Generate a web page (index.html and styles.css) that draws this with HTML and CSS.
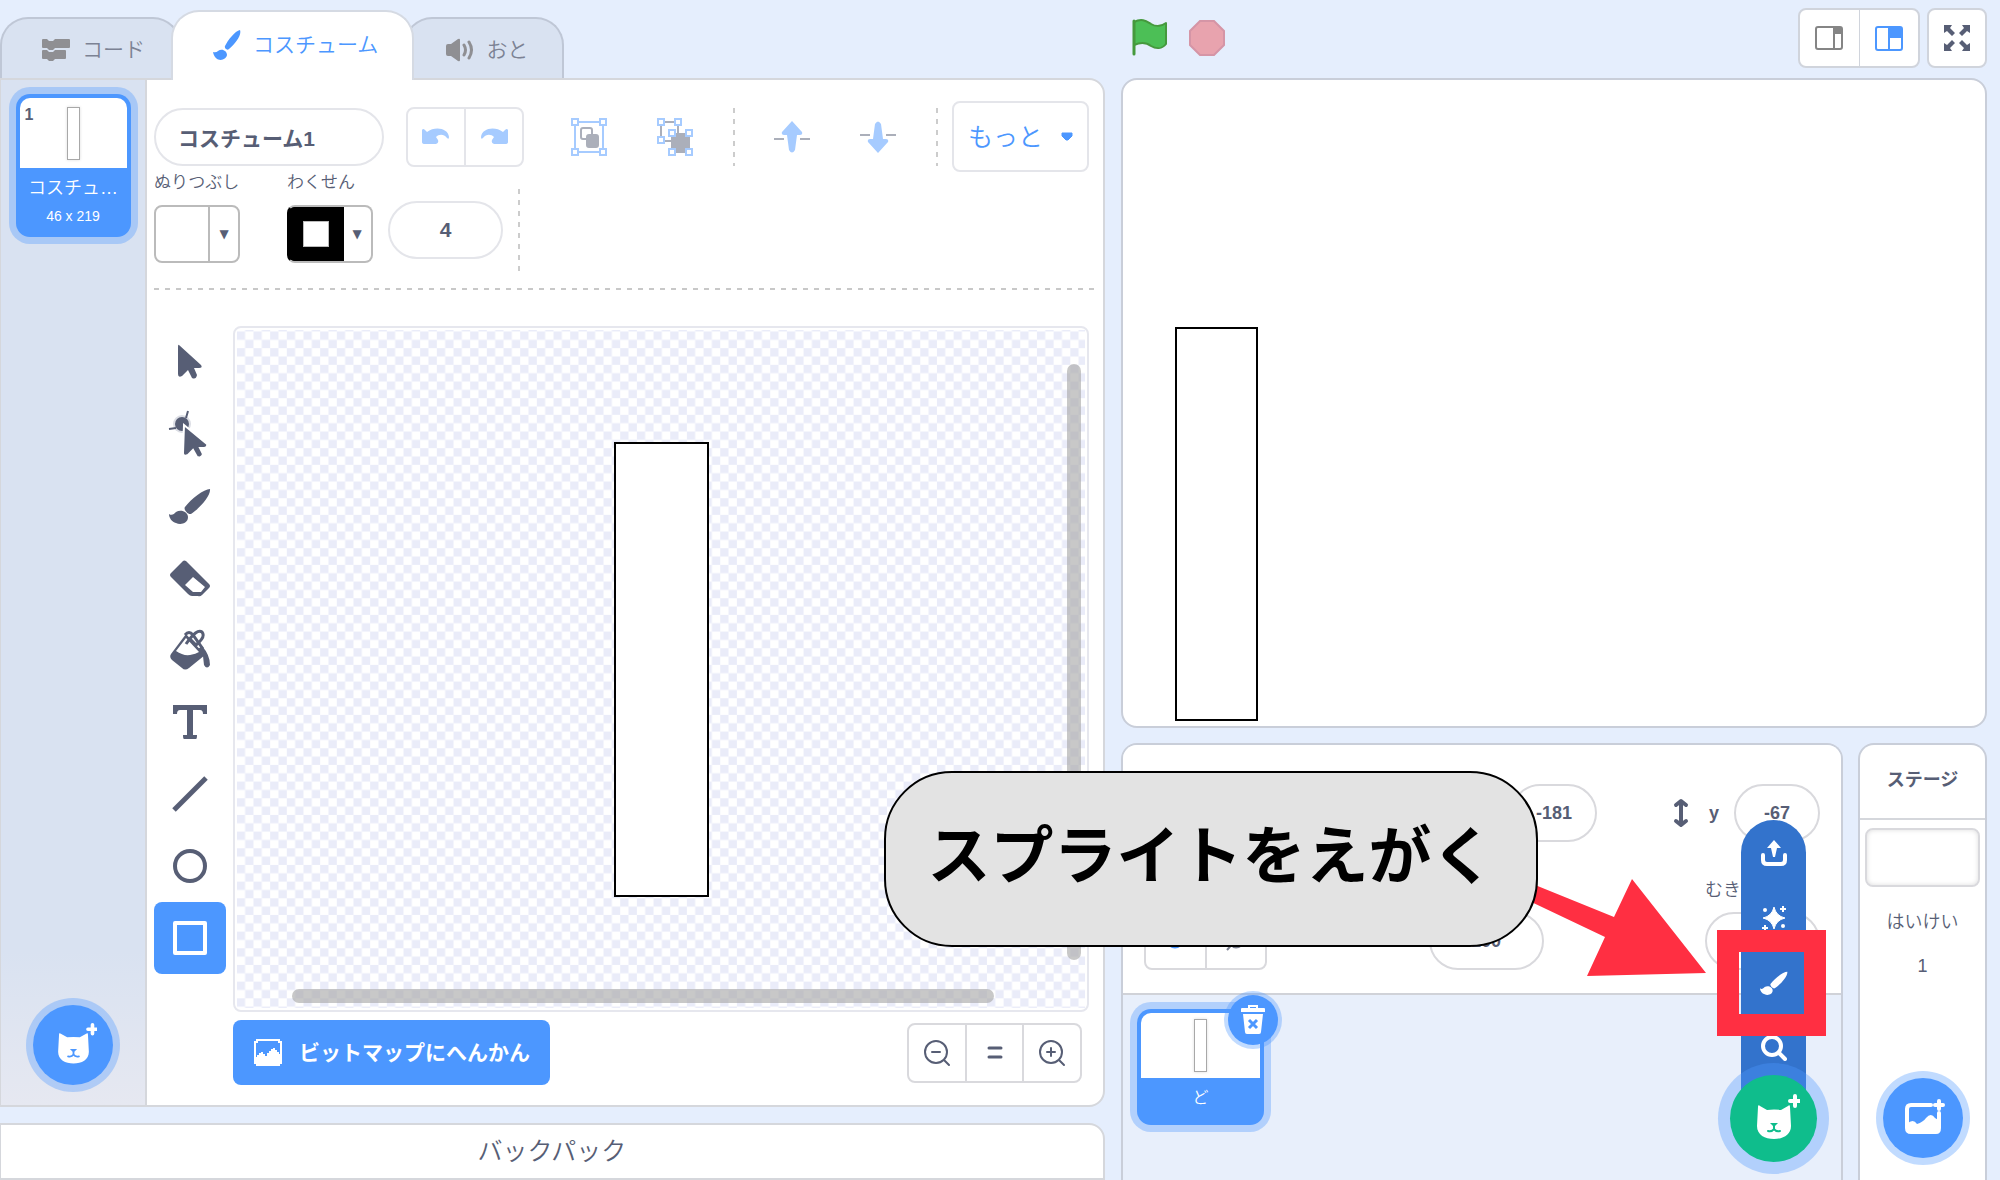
FILE: index.html
```html
<!DOCTYPE html>
<html lang="ja">
<head>
<meta charset="utf-8">
<title>コスチューム</title>
<link rel="stylesheet" href="styles.css">
</head>
<body>
<svg class="defs" aria-hidden="true">
  <symbol id="brush" viewBox="0 0 42 36">
    <path d="M41 1C35 1 22 11 16 19C14 21 19 27 22 26C30 21 42 8 41 1Z"/>
    <path d="M0 26C3 28 5 26 7 24C12 21 19 24 19 29C19 36 11 37 7 35C3 34 0 30 0 26Z"/>
  </symbol>
  <symbol id="cat" viewBox="-26 -26 52 52">
    <path d="M-16-12C-16-14-15-14-14-13L-7-9Q0-10 7-9L14-13C15-14 16-14 16-12L17 7C17 16 9 20 0 20S-17 16-17 7Z" fill="#fff"/>
    <path d="M-4 4H4L1 7H-1Z" class="cat-nose"/>
    <path d="M0 7V10Q-2 13-6 12M0 10Q2 13 6 12" class="cat-mouth"/>
    <path d="M21-23V-13M16-18H26" stroke="#fff" stroke-width="4" stroke-linecap="round"/>
  </symbol>
</svg>
<main class="app">
  <section class="left">
    <nav class="tabs">
      <button class="tab"><svg width="28" height="24" viewBox="0 0 28 24" fill="#8f8f93"><path d="M0 2Q0 1 1 1H5L7 3H11L13 1H27Q28 1 28 2V9Q28 10 27 10H13L11 12H7L5 10H1Q0 10 0 9Z"/><path d="M0 13Q0 12 1 12H5L7 14H11L13 12H23Q24 12 24 13V20Q24 21 23 21H13L11 23H7L5 21H1Q0 21 0 20Z"/></svg>コード</button>
      <button class="tab active"><svg width="28" height="31" viewBox="0 0 28 31"><path d="M27 0C22 1 15 10 12 16C11 18 14 21 16 19C22 14 29 5 27 0ZM0 22Q3 23 5 21C9 18 14 21 14 25C13 31 2 33 0 22Z" fill="#4c97ff"/></svg>コスチューム</button>
      <button class="tab"><svg width="28" height="24" viewBox="0 0 28 24"><path d="M0 8Q0 6 2 6H5L12 1Q14 0 14 2V22Q14 24 12 23L5 18H2Q0 18 0 16Z" fill="#8f8f93"/><path d="M18 7Q21 12 18 17M23 4Q28 12 23 20" fill="none" stroke="#8f8f93" stroke-width="3" stroke-linecap="round"/></svg>おと</button>
    </nav>
    <div class="panel editor">
      <aside class="costumes">
        <div class="card">
          <div class="card-pic"><b class="card-num">1</b><span class="thumb"></span></div>
          <span class="card-name">コスチュ…</span>
          <span class="card-size">46 x 219</span>
        </div>
        <button class="add" aria-label="add costume"><svg width="47" height="47" class="on-blue"><use href="#cat"/></svg></button>
      </aside>
      <div class="paint">
        <div class="row1">
          <input class="pill name" type="text" value="コスチューム1" aria-label="costume">
          <div class="group undo">
            <button aria-label="undo"><svg width="28" height="18" viewBox="0 0 28 18" fill="#a6cbff"><path d="M0 2Q1 0 3 2L5 4C13-2 26 0 27 9Q27 12 25 10C22 6 17 6 14 9L16 12Q17 15 14 16H3Q0 16 0 14Z"/></svg></button>
            <button aria-label="redo"><svg width="28" height="18" viewBox="0 0 28 18" fill="#a6cbff"><path d="M28 2Q27 0 25 2L23 4C15-2 2 0 1 9Q1 12 3 10C6 6 11 6 14 9L12 12Q11 15 14 16H25Q28 16 28 14Z"/></svg></button>
          </div>
          <div class="pair">
            <button aria-label="group"><svg width="36" height="38" viewBox="0 0 36 38" fill="none" stroke-width="2"><path d="M4 4H32V34H4Z" stroke="#a6cbff"/><rect x="10" y="10" width="11" height="11" rx="2" stroke="#abafba"/><rect x="16" y="17" width="11" height="12" rx="2" fill="#abafba" stroke="#abafba"/><g fill="#fff" stroke="#a6cbff"><path d="M1 1H7V7H1ZM29 1H35V7H29ZM1 31H7V37H1ZM29 31H35V37H29Z"/></g></svg></button>
            <button aria-label="ungroup"><svg width="36" height="38" viewBox="0 0 36 38" fill="none" stroke-width="2"><path d="M4 4H21V23H4Z" stroke="#abafba"/><path d="M15 16H32V34H15Z" fill="#abafba" stroke="#abafba"/><g fill="#fff" stroke="#a6cbff"><path d="M1 1H7V7H1ZM18 1H24V7H18ZM1 19H7V25H1ZM12 12H18V18H12ZM29 12H35V18H29ZM12 31H18V37H12ZM29 31H35V37H29Z"/></g></svg></button>
          </div>
          <i class="vdash"></i>
          <div class="pair">
            <button aria-label="forward"><svg width="38" height="32" viewBox="0 0 38 32"><path d="M1 18H11M27 18H37" stroke="#abafba" stroke-width="2"/><path d="M19 0L29 11Q30 14 27 14H24L22 29Q19 34 16 29L14 14H11Q8 14 9 11Z" fill="#a6cbff"/></svg></button>
            <button aria-label="backward"><svg width="38" height="32" viewBox="0 0 38 32"><path d="M1 14H11M27 14H37" stroke="#abafba" stroke-width="2"/><path d="M19 32L29 21Q30 18 27 18H24L22 3Q19-2 16 3L14 18H11Q8 18 9 21Z" fill="#a6cbff"/></svg></button>
          </div>
          <i class="vdash"></i>
          <button class="more">もっと<svg width="12" height="9" viewBox="0 0 12 9"><path d="M1 1H11V4L7 8H5L1 4Z" fill="#4c97ff" stroke="#4c97ff" stroke-linejoin="round"/></svg></button>
        </div>
        <div class="row2">
          <div class="swatch">
            <label for="fill">ぬりつぶし</label>
            <button id="fill" class="picker"><span class="chip"></span><span class="drop">▼</span></button>
          </div>
          <div class="swatch">
            <label for="stroke">わくせん</label>
            <button id="stroke" class="picker"><span class="chip black"><span class="hole"></span></span><span class="drop">▼</span></button>
          </div>
          <input class="pill width" type="text" value="4" aria-label="わくせん">
          <i class="vdash tall"></i>
        </div>
        <div class="work">
          <div class="tools">
            <button aria-label="select"><svg width="44" height="44" viewBox="0 0 44 44"><path d="M11 5L33 25Q35 28 31 28H26L29 35Q28 40 24 38L20 30L14 36Q10 38 10 34V7Q10 4 11 5Z"/></svg></button>
            <button aria-label="reshape"><svg width="44" height="48" viewBox="0 0 44 48"><circle cx="14" cy="14" r="9" fill="#dcdee5"/><circle cx="14" cy="14" r="7"/><path d="M1 19L8 18M18 8L20 1" stroke="#575e75" stroke-width="2"/><path d="M16 15L39 34Q40 37 36 38H32L35 44Q33 49 29 47L25 40L20 45Q15 47 15 43Z" stroke="#fff" stroke-width="2"/></svg></button>
            <button aria-label="brush"><svg width="42" height="36"><use href="#brush"/></svg></button>
            <button aria-label="eraser"><svg width="40" height="37" viewBox="0 0 40 37"><path d="M13 1Q14 0 16 1L39 24Q41 26 39 28L32 35Q30 37 28 36H22Q20 36 18 34L1 17Q-1 15 1 13ZM23 17L15 25L23 32H31L35 27Z" fill-rule="evenodd"/></svg></button>
            <button aria-label="fill tool"><svg width="42" height="42" viewBox="0 0 42 42"><path d="M2 25L17 5L36 26L20 39Q16 42 13 39L3 31Q0 28 2 25ZM17 9L7 22Q14 27 21 26Q27 25 30 23Z" fill-rule="evenodd"/><path d="M16 6Q20 1 24 6L34 20M17 15Q28-1 33 3Q37 8 27 16L20 9" fill="none" stroke="#575e75" stroke-width="3"/><path d="M33 17Q41 26 41 36Q38 41 35 36L34 27L29 20Z"/></svg></button>
            <button aria-label="text"><svg width="36" height="36" viewBox="0 0 36 36"><path d="M1 1H35V10H31Q31 6 28 6H21V31H25Q25 35 24 35H12Q11 35 11 31H15V6H8Q5 6 5 10H1Z"/></svg></button>
            <button aria-label="line"><svg width="38" height="38" viewBox="0 0 38 38"><path d="M3 35L35 3" stroke="#575e75" stroke-width="5"/></svg></button>
            <button aria-label="circle"><svg width="34" height="34" viewBox="0 0 34 34"><circle cx="17" cy="17" r="15" fill="none" stroke="#575e75" stroke-width="4"/></svg></button>
            <button class="on" aria-label="rectangle"><svg width="34" height="34" viewBox="0 0 34 34"><rect x="2" y="2" width="30" height="30" fill="none" stroke="#fff" stroke-width="4" stroke-linejoin="round"/></svg></button>
          </div>
          <div class="board">
            <div class="canvas">
              <svg class="checks"><defs><pattern id="ck" x="-0.200" y="1.500" width="16.670" height="16.670" patternUnits="userSpaceOnUse"><path d="M0 0H8.330V8.330H0ZM8.330 8.330H16.670V16.670H8.330Z" fill="#eaecf9"/></pattern></defs><rect width="100%" height="100%" fill="url(#ck)"/></svg>
              <span class="drawn"></span>
              <span class="bar-v"></span>
              <span class="bar-h"></span>
            </div>
            <div class="foot">
              <button class="convert"><svg width="30" height="28" viewBox="0 0 30 28"><path d="M4 1H26V3H28V24H26V26H4V24H2V3H4Z" fill="none" stroke="#fff" stroke-width="2"/><path d="M2 18H4V16H6V14H8V13H10V15H12V17H14V14H16V12H18V10H20V9H22V11H24V13H26V15H28V24H26V26H4V24H2Z" fill="#fff"/></svg>ビットマップにへんかん</button>
              <div class="group zoom">
                <button aria-label="zoom out"><svg width="28" height="28" viewBox="0 0 28 28" class="line"><circle cx="13" cy="13" r="11"/><path d="M9 13H17M21 21L26 26"/></svg></button>
                <button aria-label="reset zoom"><svg width="28" height="28" viewBox="0 0 28 28" class="line bold"><path d="M8 9H20M8 18H20"/></svg></button>
                <button aria-label="zoom in"><svg width="28" height="28" viewBox="0 0 28 28" class="line"><circle cx="13" cy="13" r="11"/><path d="M9 13H17M13 9V17M21 21L26 26"/></svg></button>
              </div>
            </div>
          </div>
        </div>
      </div>
    </div>
    <button class="backpack">バックパック</button>
  </section>

  <section class="right">
    <header class="controls">
      <button aria-label="go"><svg width="36" height="38" viewBox="0 0 36 38"><path d="M2 3C10-1 14 2 19 5C24 8 30 7 34 4V25C30 30 24 30 19 27C14 23 9 23 2 26" fill="#4cbf56" stroke="#45993d" stroke-width="2" stroke-linejoin="round"/><path d="M2 2V35" stroke="#45993d" stroke-width="3" stroke-linecap="round"/></svg></button>
      <button aria-label="stop"><svg width="36" height="36" viewBox="0 0 36 36"><path d="M11 1H25L35 11V25L25 35H11L1 25V11Z" fill="#e8a3ae" stroke="#d595a6" stroke-width="2"/></svg></button>
      <span class="grow"></span>
      <div class="group size">
        <button aria-label="small stage"><svg width="28" height="26" viewBox="0 0 28 26" fill="none" stroke="#858585" stroke-width="2"><rect x="1" y="2" width="26" height="22" rx="2"/><path d="M19 2V24"/><path d="M20 3H26V8H20Z" fill="#858585"/></svg></button>
        <button aria-label="large stage"><svg width="28" height="26" viewBox="0 0 28 26" fill="none" stroke="#4c97ff" stroke-width="2"><rect x="1" y="2" width="26" height="23" rx="2"/><path d="M14 2V25"/><path d="M15 3H26V12H15Z" fill="#4c97ff"/></svg></button>
      </div>
      <div class="group full">
        <button aria-label="full screen"><svg width="26" height="26" viewBox="0 0 26 26" fill="#575e75"><path d="M0 0H8L6 3L11 8L8 11L3 6L0 8Z"/><path d="M26 0H18L20 3L15 8L18 11L23 6L26 8ZM0 26H8L6 23L11 18L8 15L3 20L0 18ZM26 26H18L20 23L15 18L18 15L23 20L26 18Z"/></svg></button>
      </div>
    </header>
    <div class="panel stage"><span class="sprite"></span></div>
    <div class="lower">
      <div class="panel sprites">
        <div class="info">
          <div class="line1">
            <input class="pill small" type="text" value="-181" aria-label="x">
            <label class="ylab" for="ypos"><svg width="16" height="30" viewBox="0 0 16 30"><path d="M8 4V26M3 7L8 3L13 7M3 23L8 27L13 23" fill="none" stroke="#575e75" stroke-width="4" stroke-linecap="round" stroke-linejoin="round"/></svg>y</label>
            <input class="pill small" type="text" value="-67" id="ypos">
          </div>
          <div class="line2">
            <div class="group show">
              <button aria-label="show"><svg width="28" height="22" viewBox="0 0 28 22"><path d="M2 11Q14-6 26 11Q14 28 2 11Z" fill="#4c97ff"/><circle cx="14" cy="11" r="5" fill="#fff"/></svg></button>
              <button aria-label="hide"><svg width="28" height="22" viewBox="0 0 28 22"><path d="M2 11Q14-6 26 11Q14 28 2 11Z" fill="#7c8090"/><circle cx="14" cy="11" r="5" fill="#fff"/><path d="M4 22L23 1" stroke="#fff" stroke-width="5"/><path d="M5 21L23 1" stroke="#7c8090" stroke-width="2"/></svg></button>
            </div>
            <input class="pill width" type="text" value="100" aria-label="size">
            <div class="dir"><label for="dir">むき</label><input class="pill width" type="text" id="dir"></div>
          </div>
        </div>
        <div class="list">
          <div class="card wide">
            <div class="card-pic"><span class="thumb"></span></div>
            <span class="card-name">ど</span>
            <button class="trash" aria-label="delete"><svg width="26" height="30" viewBox="0 0 26 30"><path d="M9 3V1H17V3" fill="none" stroke="#fff" stroke-width="2"/><path d="M1 4Q1 3 2 3H24Q25 3 25 4V7H1ZM3 9H23L21 27Q21 29 19 29H7Q5 29 5 27Z" fill="#fff"/><path d="M9 15L17 23M17 15L9 23" stroke="#4c97ff" stroke-width="3"/></svg></button>
          </div>
        </div>
        <div class="menu">
          <button aria-label="upload"><svg width="26" height="26" viewBox="0 0 26 26"><path d="M13 0L20 8H16L14 17H12L10 8H6Z" fill="#fff"/><path d="M2 15V20Q2 24 6 24H20Q24 24 24 20V15" fill="none" stroke="#fff" stroke-width="4" stroke-linecap="round"/></svg></button>
          <button aria-label="surprise"><svg width="26" height="26" viewBox="0 0 26 26" fill="#fff"><path d="M13 2Q15 11 24 13Q15 15 13 24Q11 15 2 13Q11 11 13 2Z" stroke="#fff" stroke-linejoin="round"/><path d="M22 1V7M19 4H25M4 20V26M1 23H7" stroke="#fff" stroke-width="2"/><circle cx="4" cy="5" r="2"/><circle cx="22" cy="21" r="2"/></svg></button>
          <button aria-label="paint"><svg width="28" height="26" viewBox="0 0 42 36" fill="#fff"><use href="#brush"/></svg></button>
          <button aria-label="search"><svg width="26" height="26" viewBox="0 0 26 26" fill="none" stroke="#fff" stroke-width="4" stroke-linecap="round"><circle cx="11" cy="11" r="9"/><path d="M18 18L24 24"/></svg></button>
        </div>
        <button class="add green" aria-label="add sprite"><svg width="52" height="52" class="on-green"><use href="#cat"/></svg></button>
      </div>
      <div class="panel backdrops">
        <h2>ステージ</h2>
        <div class="backdrop"></div>
        <p>はいけい</p>
        <p>1</p>
        <button class="add" aria-label="add backdrop"><svg width="52" height="52" viewBox="-26 -26 52 52" fill="none"><path d="M8-13H-12Q-16-13-16-9V10Q-16 14-12 14H13Q16 14 16 10V-5" stroke="#fff" stroke-width="4" stroke-linecap="round"/><path d="M-16 6Q-10 0-6 6Q0 4 3 0Q8-6 12 0L17 3V13H-16Z" fill="#fff"/><path d="M16-18V-8M11-13H21" stroke="#4c97ff" stroke-width="8"/><path d="M16-17V-9M12-13H20" stroke="#fff" stroke-width="4" stroke-linecap="round"/></svg></button>
      </div>
    </div>
    <svg class="arrow" width="200" height="110" viewBox="0 0 200 110"><path d="M12 6L108 45L126 7L200 101L81 104L99 65L2 19Z" fill="#ff2f42"/></svg>
    <div class="frame"></div>
    <div class="callout">スプライトをえがく</div>
  </section>
</main>
</body>
</html>
```
FILE: styles.css
```css
* { box-sizing: border-box; }
body {
  margin: 0;
  background: #e5eefd;
  color: #575e75;
  font-family: "Liberation Sans", "Noto Sans CJK JP", sans-serif;
  font-size: 18px;
  font-weight: 350;
  line-height: 22px;
}
button {
  margin: 0;
  padding: 0;
  border: 0;
  background: none;
  color: inherit;
  font: inherit;
  display: flex;
  align-items: center;
  justify-content: center;
}
svg { display: block; flex: none; }
.defs { position: absolute; width: 0; height: 0; }
.app { display: flex; gap: 16px; min-height: 100vh; padding-right: 13px; }
.left { flex: 1; min-width: 0; display: flex; flex-direction: column; }
.right { width: 866px; display: flex; flex-direction: column; position: relative; }
.panel { background: #fff; border: 2px solid #c9ced9; border-radius: 16px; }

/* Tabs */
.tabs { display: flex; align-items: flex-end; height: 78px; }
.tab {
  height: 61px;
  padding: 2px 34px 0 40px;
  gap: 12px;
  background: #d9e2f1;
  border: 2px solid #bfc7d6;
  border-bottom: 0;
  border-radius: 28px 28px 0 0;
  font-size: 21px;
  color: #7c8294;
}
.tab.active {
  height: 70px;
  margin: 0 -10px -2px;
  padding-top: 0;
  padding-bottom: 2px;
  background: #fff;
  border-color: #d5dae3;
  color: #4c97ff;
  z-index: 1;
}

/* Costume editor */
.editor { flex: 1; display: flex; border-left-width: 1px; border-radius: 0 16px 16px 0; border-color: #d5d7dc; }
.costumes {
  width: 146px;
  padding: 14px;
  display: flex;
  flex-direction: column;
  justify-content: space-between;
  align-items: center;
  background: linear-gradient(#d9e2f1 85%, #e6e8f1);
  border-right: 2px solid #d5d7dc;
}
.card {
  position: relative;
  width: 115px;
  height: 143px;
  padding: 4px;
  display: flex;
  flex-direction: column;
  align-items: center;
  background: #4c97ff;
  border-radius: 14px;
  box-shadow: 0 0 0 7px rgba(76, 151, 255, .35);
  color: #fff;
}
.card-pic {
  width: 100%;
  height: 70px;
  display: flex;
  align-items: center;
  justify-content: center;
  position: relative;
  background: #fff;
  border-radius: 10px 10px 0 0;
}
.card-num { position: absolute; left: 5px; top: 6px; color: #575e75; font-size: 16px; font-weight: bold; }
.thumb { width: 13px; height: 53px; border: 1px solid #a8a8a8; box-shadow: 0 0 3px #ddd; }
.card-name { margin-top: 9px; }
.card-size { margin-top: 6px; font-size: 14px; }
.add {
  width: 80px;
  height: 80px;
  margin-bottom: 6px;
  border-radius: 50%;
  background: #4c97ff;
  box-shadow: 0 0 0 7px rgba(76, 151, 255, .35);
}
.cat-nose { fill: currentColor; }
.cat-mouth { fill: none; stroke: currentColor; stroke-width: 2; stroke-linecap: round; }
.on-blue { color: #4c97ff; }
.on-green { color: #0fbd8c; }

.paint { flex: 1; min-width: 0; padding: 21px 14px 20px 7px; display: flex; flex-direction: column; }
.row1 { display: flex; align-items: center; gap: 15px; height: 71px; }
.pill {
  height: 58px;
  border: 2px solid #e4e5ea;
  border-radius: 29px;
  background: #fff;
  color: #575e75;
  font: bold 21px/24px "Liberation Sans", "Noto Sans CJK JP", sans-serif;
  text-align: center;
}
.name { width: 230px; padding: 0 22px; text-align: left; }
.width { width: 115px; }
.small { width: 86px; padding: 0; }
.group { display: flex; height: 60px; background: #fff; border: 2px solid #e4e5ea; border-radius: 8px; }
.group button { flex: 1; }
.group button + button { border-left: 2px solid #e4e5ea; }
.undo { width: 118px; margin: 0 7px; }
.pair { display: flex; }
.pair button { width: 86px; height: 60px; }
.vdash { width: 2px; height: 58px; margin-right: -1px; background: repeating-linear-gradient(#ccc 0 5px, transparent 5px 11px); }
.more {
  width: 137px;
  height: 71px;
  margin-left: auto;
  gap: 18px;
  border: 2px solid #e4e5ea;
  border-radius: 8px;
  color: #4c97ff;
  font-size: 25px;
}
.row2 {
  display: flex;
  align-items: flex-start;
  height: 118px;
  margin-right: -8px;
  background: repeating-linear-gradient(90deg, #c8c8c8 0 5px, transparent 5px 11px) 0 100% / 100% 2px no-repeat;
}
.swatch { width: 86px; margin-right: 47px; display: flex; flex-direction: column; gap: 11px; font-size: 17px; white-space: nowrap; }
.swatch + .swatch { margin-right: 15px; }
.picker { width: 86px; height: 58px; align-items: stretch; border: 2px solid #bbb; border-radius: 8px; overflow: hidden; }
.chip { flex: 1; display: flex; align-items: center; justify-content: center; border-right: 2px solid #bbb; }
#stroke { border-left-color: #000; background: linear-gradient(90deg, #000 57px, #fff 57px) border-box; }
.chip.black { background: #000; border: 0; }
.hole { width: 26px; height: 26px; background: #fff; border: 1px solid #bbb; }
.drop { width: 28px; display: flex; align-items: center; justify-content: center; font: 12px "DejaVu Sans", sans-serif; }
.row2 .pill { margin: 29px 15px 0 0; }
.vdash.tall { height: 84px; margin-top: 17px; }

.work { flex: 1; display: flex; gap: 7px; margin-top: 36px; }
.tools { width: 72px; }
.tools button { width: 72px; height: 72px; border-radius: 8px; }
.tools svg { fill: #575e75; }
.tools .on { background: #4c97ff; }
.board { flex: 1; display: flex; flex-direction: column; gap: 8px; }
.canvas {
  flex: 1;
  display: flex;
  align-items: center;
  justify-content: center;
  position: relative;
  border: 2px solid #e6e7ee;
  border-radius: 8px;
}
.checks { position: absolute; inset: 2px; width: calc(100% - 4px); height: calc(100% - 4px); }
.drawn { position: relative; width: 95px; height: 455px; background: #fff; border: 2px solid #000; }
.bar-v, .bar-h { position: absolute; background: rgba(170, 170, 170, .65); border-radius: 7px; }
.bar-v { top: 36px; bottom: 50px; right: 6px; width: 14px; }
.bar-h { left: 57px; right: 93px; bottom: 7px; height: 14px; }
.foot { display: flex; align-items: center; justify-content: space-between; padding-right: 7px; }
.convert { width: 317px; height: 65px; gap: 16px; border-radius: 8px; background: #4c97ff; color: #fff; font-size: 21px; font-weight: bold; }
.zoom { width: 175px; border-color: #d9d9dd; }
.zoom button + button { border-color: #d9d9dd; }
.line { fill: none; stroke: #575e75; stroke-width: 2; stroke-linecap: round; }
.line.bold { stroke-width: 3; }
.backpack {
  height: 57px;
  margin-top: 16px;
  padding-bottom: 2px;
  background: #fff;
  border: 2px solid #d5d7dc;
  border-left-width: 1px;
  border-radius: 0 16px 0 0;
  font-size: 25px;
}

/* Stage */
.controls { height: 78px; display: flex; padding-top: 8px; }
.controls > button { width: 36px; height: 60px; margin: 0 9px 0 11px; }
.controls > button + button { margin-left: 12px; }
.grow { flex: 1; }
.size { width: 122px; margin-right: 7px; border-color: #d0d4dc; }
.size button + button { border-color: #d0d4dc; border-left-width: 1px; }
.full { width: 60px; border-color: #d0d4dc; }
.stage { aspect-ratio: 866 / 650; position: relative; }
.sprite { position: absolute; left: 6%; bottom: 5px; width: 83px; height: 394px; border: 2px solid #000; }
.lower { flex: 1; display: flex; gap: 15px; margin-top: 15px; }
.lower .panel { border-bottom: 0; border-radius: 16px 16px 0 0; }
.sprites { flex: 1; display: flex; flex-direction: column; position: relative; background: #e8effb; }
.info { height: 250px; padding: 39px 21px 0; background: #fff; border-bottom: 2px solid #d0d2d8; border-radius: 14px 14px 0 0; }
.info .pill { border-color: #d9d9dd; font-size: 18px; }
.line1 { display: flex; justify-content: flex-end; align-items: center; }
.ylab { display: flex; align-items: center; gap: 20px; margin: 0 15px 0 76px; font-size: 18px; font-weight: bold; }
.line2 { display: flex; justify-content: space-between; align-items: flex-end; margin-top: 37px; }
.show { width: 123px; border-color: #d9d9dd; }
.show button + button { border-color: #d9d9dd; }
.dir { display: flex; flex-direction: column; gap: 11px; }
.list { padding: 14px; }
.wide { width: 127px; height: 116px; }
.wide .card-pic { height: 65px; }
.wide .card-name { font-size: 16px; }
.trash {
  position: absolute;
  right: -14px;
  top: -14px;
  width: 50px;
  height: 50px;
  border-radius: 50%;
  background: #4c97ff;
  box-shadow: 0 0 0 4px rgba(76, 151, 255, .35);
}
.menu { position: absolute; right: 35px; bottom: 62px; height: 298px; width: 65px; background: #3373cc; border-radius: 33px 33px 0 0; }
.menu button { width: 65px; height: 65px; }
.green {
  position: absolute;
  right: 24px;
  bottom: 18px;
  width: 87px;
  height: 87px;
  margin: 0;
  background: #0fbd8c;
  box-shadow: 0 0 0 12px rgba(76, 151, 255, .35);
}
.backdrops { width: 129px; display: flex; flex-direction: column; align-items: center; }
.backdrops h2 { width: 100%; height: 75px; margin: 0; padding-top: 24px; border-bottom: 2px solid #d5d7dc; font-size: 18px; text-align: center; }
.backdrop { width: 115px; height: 59px; margin: 8px 0 2px; border: 2px solid #d9d9dd; border-radius: 8px; box-shadow: inset 0 0 5px #ddd; }
.backdrops p { margin: 22px 0 0; }
.backdrops .add { margin: auto 0 22px; }

/* Annotations laid over the page */
.callout {
  position: absolute;
  left: -237px;
  top: 771px;
  width: 654px;
  height: 176px;
  padding-bottom: 6px;
  display: flex;
  align-items: center;
  justify-content: center;
  background: #e3e3e3;
  border: 2px solid #000;
  border-radius: 68px;
  color: #000;
  font-size: 63px;
  line-height: 80px;
  font-weight: bold;
  white-space: nowrap;
}
.arrow { position: absolute; left: 385px; top: 872px; }
.frame { position: absolute; left: 596px; top: 930px; width: 109px; height: 106px; border: 22px solid #ff2f42; }
```
